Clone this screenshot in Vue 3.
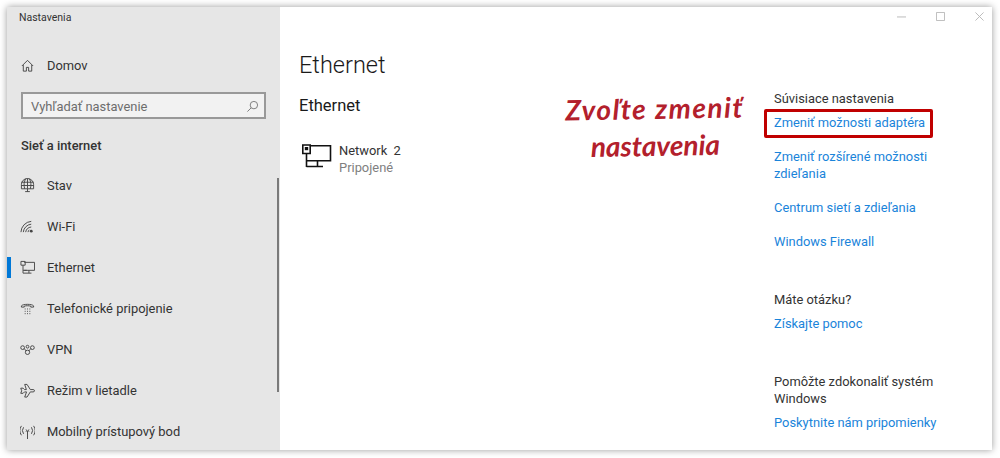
<script setup>
const nav = [
  { label: 'Stav', icon: 'stav' },
  { label: 'Wi-Fi', icon: 'wifi' },
  { label: 'Ethernet', icon: 'eth', active: true },
  { label: 'Telefonické pripojenie', icon: 'phone' },
  { label: 'VPN', icon: 'vpn' },
  { label: 'Režim v lietadle', icon: 'plane' },
  { label: 'Mobilný prístupový bod', icon: 'hotspot' },
]
</script>

<template>
  <div class="page">
    <div class="window">
      <aside class="sidebar">
        <div class="app-title">Nastavenia</div>
        <div class="item home">
          <svg class="ico" viewBox="0 0 16 16"><path d="M2 8.500 8 2.500l6 6M3.500 7.500v6.500h3.300v-4h2.400v4h3.300V7.500" /></svg>
          <span>Domov</span>
        </div>
        <div class="search">
          <span>Vyhľadať nastavenie</span>
          <svg class="search-ico" viewBox="0 0 14 14"><circle cx="8.500" cy="5.500" r="4" /><path d="M5.500 8.500 1.500 12.500" /></svg>
        </div>
        <div class="section">Sieť a internet</div>
        <nav class="nav">
          <div v-for="n in nav" :key="n.label" class="item" :class="{ active: n.active }">
            <svg class="ico" viewBox="0 0 16 16">
              <template v-if="n.icon === 'stav'">
                <path d="M1.500 11.500V7a6.500 6.500 0 0 1 13 0v4.500zM8 .5v11M5 11.500C4 8 4 4 6 .9M11 11.500C12 8 12 4 10 .9M1.500 4.500h13M1.500 8h13M8 11.500v3M5.500 14.500h5" />
              </template>
              <template v-else-if="n.icon === 'wifi'">
                <path d="M1 14A12 12 0 0 1 12 2.500M3.500 14A9.500 9.500 0 0 1 12 5.500M6 14A7 7 0 0 1 12 8.500M8.500 14A4 4 0 0 1 10 11.500" />
                <circle class="fill" cx="12" cy="13" r="1.500" />
              </template>
              <template v-else-if="n.icon === 'eth'">
                <path d="M4.500 2.500h11v8.500h-11M1 1.500h4.500v4H1zM3.200 5.500V14M3.200 11h4M3.200 14h9M9.500 11v3" />
              </template>
              <template v-else-if="n.icon === 'phone'">
                <path d="M1.500 6.500V5.200C3 3 13 3 14.500 5.200v1.300h-3V5.500c-2-.6-5-.6-7 0v1zM5 8.500h1M7.500 8.500h1M10 8.500h1M5 11h1M7.500 11h1M10 11h1M5 13.500h1M7.500 13.500h1M10 13.500h1" />
              </template>
              <template v-else-if="n.icon === 'vpn'">
                <circle cx="2.800" cy="6" r="2" /><circle cx="13.200" cy="6" r="2" /><circle cx="8" cy="11" r="2.300" /><circle cx="8" cy="5" r="1.500" />
                <path d="M4.500 7 6.500 9.500M11.500 7 9.500 9.500" />
              </template>
              <template v-else-if="n.icon === 'plane'">
                <path d="M.8 5.500h2.500l1.500 1.500h2L5 1.500h2.500L11 7h3c2 0 2 2.500 0 2.500h-3L7.500 15H5l2-5.500H4.800L3.300 11H.8l1-2.700z" />
              </template>
              <template v-else>
                <path d="M8 6v9M6.500 4.800a2 2 0 0 1 0 2.400M9.500 4.800a2 2 0 0 0 0 2.400M3.800 2.500a6 6 0 0 0 0 7M12.200 2.500a6 6 0 0 1 0 7M1.500 1a9 9 0 0 0 0 10M14.500 1a9 9 0 0 1 0 10" transform="translate(0 1)" />
              </template>
            </svg>
            <span>{{ n.label }}</span>
          </div>
        </nav>
        <div class="scrollbar"></div>
      </aside>

      <main class="main">
        <div class="controls">
          <svg class="ctl" viewBox="0 0 10 10"><path d="M0 5.500h10" /></svg>
          <svg class="ctl" viewBox="0 0 10 10"><path d="M.5.500h9v9h-9z" /></svg>
          <svg class="ctl" viewBox="0 0 10 10"><path d="M.5.500l9 9M9.500.500l-9 9" /></svg>
        </div>
        <div class="content">
          <section class="center">
            <h1>Ethernet</h1>
            <h2>Ethernet</h2>
            <div class="net">
              <svg class="net-ico" viewBox="0 0 30 25"><path d="M8 1.800h20.500v15H4.500M.8 1h7.400v8.500H.8zM4.500 9.500v13.500M4.500 22.500H21M15.500 16.800v5.700" /><path class="notch" d="M2.800 3h3.400v3.200H2.800z" /></svg>
              <div>
                <div class="net-name">Network&nbsp; 2</div>
                <div class="net-state">Pripojené</div>
              </div>
            </div>
          </section>
          <section class="side">
            <div class="side-title">Súvisiace nastavenia</div>
            <a class="link first">Zmeniť možnosti adaptéra</a>
            <a class="link gap">Zmeniť rozšírené možnosti zdieľania</a>
            <a class="link gap">Centrum sietí a zdieľania</a>
            <a class="link gap">Windows Firewall</a>
            <div class="side-title block">Máte otázku?</div>
            <a class="link first">Získajte pomoc</a>
            <div class="side-title block2">Pomôžte zdokonaliť systém Windows</div>
            <a class="link first">Poskytnite nám pripomienky</a>
          </section>
        </div>
      </main>
    </div>
    <div class="note"><div class="note1">Zvoľte zmeniť</div><div class="note2">nastavenia</div></div>
    <div class="redbox"></div>
  </div>
</template>

<style>
html, body { margin: 0; background: #fff; }
</style>

<style scoped>
.page {
  position: relative;
  width: 1000px;
  height: 458px;
  padding: 7px 8px 8px 7px;
  box-sizing: border-box;
  overflow: hidden;
  background: #fff;
  font-family: Roboto, "Noto Sans", sans-serif;
  font-size: 12.900px;
  color: #333;
}
.window {
  display: flex;
  height: 443px;
  box-shadow: 0 0 7px rgba(0, 0, 0, 0.4);
  background: #fff;
}
.sidebar {
  position: relative;
  flex: 0 0 273px;
  background: #e6e6e6;
}
.app-title {
  padding: 3px 0 0 12px;
  font-size: 10.500px;
  line-height: 15px;
}
.item {
  display: flex;
  align-items: center;
  height: 41px;
  position: relative;
  padding-left: 13px;
  box-sizing: border-box;
}
.item span { margin-left: 12px; }
.home { margin-top: 20px; }
.ico {
  width: 15px;
  height: 15px;
  flex: none;
  fill: none;
  stroke: #444;
  stroke-width: 1;
}
.ico .fill { fill: #444; stroke: none; }
.search {
  display: flex;
  align-items: center;
  justify-content: space-between;
  box-sizing: border-box;
  width: 245px;
  height: 27px;
  margin: 6px 0 0 14px;
  padding: 1px 5px 0 8px;
  background: #f2f2f2;
  border: 2px solid #999;
  color: #6d6d6d;
}
.search-ico {
  width: 13px;
  height: 13px;
  fill: none;
  stroke: #777;
  stroke-width: 1;
}
.section {
  margin: 16px 0 0 14px;
  font-weight: 500;
  line-height: 22px;
}
.nav { margin-top: 8px; }
.active::before {
  content: "";
  position: absolute;
  left: 0;
  top: 10px;
  width: 4px;
  height: 21px;
  background: #0078d7;
}
.scrollbar {
  position: absolute;
  right: 1px;
  top: 171px;
  width: 2px;
  height: 214px;
  background: #7a7a7a;
}
.main { flex: 1; min-width: 0; }
.controls {
  display: flex;
  justify-content: flex-end;
  gap: 30px;
  height: 10px;
  padding: 5px 8px 0 0;
}
.ctl {
  width: 9px;
  height: 9px;
  fill: none;
  stroke: #b5b5b5;
  stroke-width: 1;
}
.content {
  display: flex;
  padding-left: 19px;
}
.center { flex: 0 0 475px; }
h1 {
  margin: 27px 0 0;
  font-size: 23.500px;
  font-weight: 300;
  line-height: 32px;
  color: #1a1a1a;
}
h2 {
  margin: 14px 0 0;
  font-size: 16.500px;
  font-weight: 400;
  line-height: 22px;
  color: #1a1a1a;
}
.net {
  display: flex;
  align-items: flex-start;
  gap: 7px;
  margin: 25px 0 0 3px;
  line-height: 17px;
}
.net-ico {
  width: 30px;
  height: 25px;
  margin-top: 2px;
  fill: none;
  stroke: #111;
  stroke-width: 1.600;
}
.net-ico .notch { fill: #111; stroke: none; }
.net-state { color: #808080; }
.side { flex: 0 0 190px; line-height: 17px; margin-top: 68px; }
.link { display: block; color: #1a84da; }
.first { margin-top: 7px; }
.gap { margin-top: 17px; }
.block { margin-top: 41px; }
.block2 { margin-top: 41px; }
.note {
  position: absolute;
  left: 565px;
  top: 90px;
  width: 180px;
  text-align: center;
  font-family: Lato, "Liberation Sans", sans-serif;
  font-style: italic;
  font-weight: 700;
  font-size: 28px;
  line-height: 36px;
  color: #b3202c;
  transform: rotate(-1deg);
}
.note1 { letter-spacing: 1.500px; white-space: nowrap; }
.note2 { margin-top: 1px; }
.redbox {
  position: absolute;
  left: 764px;
  top: 109px;
  width: 169px;
  height: 29px;
  box-sizing: border-box;
  border: 3px solid #c00000;
  border-radius: 2px;
}
</style>
